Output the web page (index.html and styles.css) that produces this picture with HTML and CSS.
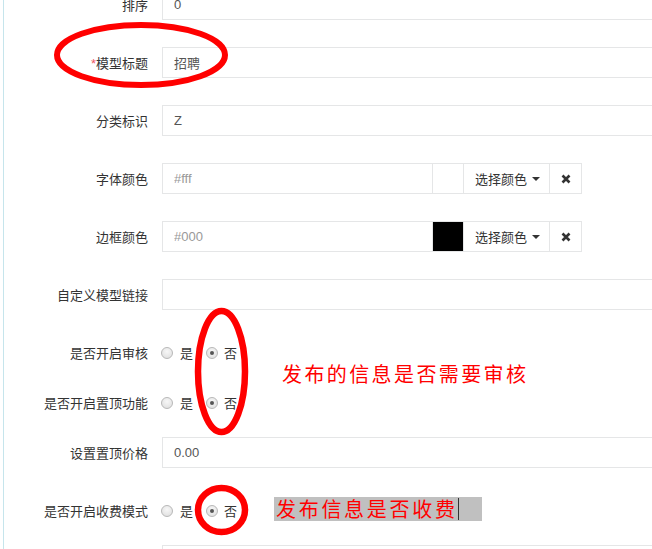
FILE: index.html
```html
<!DOCTYPE html>
<html lang="zh-CN">
<head>
    <meta charset="UTF-8">
    <title>模型设置</title>
    <link rel="stylesheet" href="styles.css">
</head>
<body>
    <div class="page">
        <form class="form">
            <div class="row row-top">
                <label class="lbl">排序</label>
                <input class="inp" type="text" value="0">
            </div>
            <div class="row">
                <label class="lbl"><span class="req">*</span>模型标题</label>
                <input class="inp" type="text" value="招聘">
            </div>
            <div class="row">
                <label class="lbl">分类标识</label>
                <input class="inp" type="text" value="Z">
            </div>
            <div class="row">
                <label class="lbl">字体颜色</label>
                <div class="color-group">
                    <input class="inp inp-color" type="text" placeholder="#fff">
                    <span class="swatch"></span>
                    <button class="btn btn-pick" type="button">选择颜色 <span class="caret"></span></button>
                    <button class="btn btn-clear" type="button">
                        <svg width="10" height="10" viewBox="0 0 10 10"><path d="M1.5 1.5L8.5 8.5M8.5 1.5L1.5 8.5" stroke="#333" stroke-width="2.6" stroke-linecap="butt"/></svg>
                    </button>
                </div>
            </div>
            <div class="row">
                <label class="lbl">边框颜色</label>
                <div class="color-group">
                    <input class="inp inp-color" type="text" placeholder="#000">
                    <span class="swatch swatch-black"></span>
                    <button class="btn btn-pick" type="button">选择颜色 <span class="caret"></span></button>
                    <button class="btn btn-clear" type="button">
                        <svg width="10" height="10" viewBox="0 0 10 10"><path d="M1.5 1.5L8.5 8.5M8.5 1.5L1.5 8.5" stroke="#333" stroke-width="2.6" stroke-linecap="butt"/></svg>
                    </button>
                </div>
            </div>
            <div class="row">
                <label class="lbl">自定义模型链接</label>
                <input class="inp" type="text">
            </div>
            <div class="row row-radio">
                <label class="lbl">是否开启审核</label>
                <div class="radios">
                    <span class="radio"><span class="dot"></span>是</span>
                    <span class="radio"><span class="dot on"></span>否</span>
                </div>
            </div>
            <div class="row row-radio">
                <label class="lbl">是否开启置顶功能</label>
                <div class="radios">
                    <span class="radio"><span class="dot"></span>是</span>
                    <span class="radio"><span class="dot on"></span>否</span>
                </div>
            </div>
            <div class="row">
                <label class="lbl">设置置顶价格</label>
                <input class="inp" type="text" value="0.00">
            </div>
            <div class="row row-radio">
                <label class="lbl">是否开启收费模式</label>
                <div class="radios">
                    <span class="radio"><span class="dot"></span>是</span>
                    <span class="radio"><span class="dot on"></span>否</span>
                </div>
            </div>
            <div class="row">
                <label class="lbl"></label>
                <input class="inp" type="text">
            </div>
        </form>
    </div>

    <!-- красные пометки поверх формы -->
    <svg class="marks" width="652" height="549" viewBox="0 0 652 549">
        <ellipse cx="141" cy="55" rx="84" ry="30" fill="none" stroke="#ff0000" stroke-width="6"/>
        <ellipse cx="221.5" cy="371.5" rx="23.5" ry="60.5" fill="none" stroke="#ff0000" stroke-width="6.5"/>
        <ellipse cx="221.5" cy="510" rx="23.5" ry="22" fill="none" stroke="#ff0000" stroke-width="6.5"/>
    </svg>
    <div class="note note-audit">发布的信息是否需要审核</div>
    <div class="note note-fee">发布信息是否收费<span class="cursor"></span></div>
</body>
</html>
```

FILE: styles.css
```css
body {
    margin: 0;
    position: relative;
    height: 549px;
    overflow: hidden;
    font-family: "Liberation Sans", "Noto Sans CJK SC", sans-serif;
    font-size: 13px;
    color: #333;
    background: #fff;
}

.page {
    height: 549px;
    margin-left: 3px;
    border-left: 1px solid #c6e5ec;
    overflow: hidden;
}

.form {
    display: flex;
    flex-direction: column;
    margin-top: -11px;
}

.row {
    display: flex;
    align-items: center;
    height: 31px;
    margin-bottom: 27px;
    flex: none;
}

.row-radio {
    margin-bottom: 19px;
}

.lbl {
    width: 144px;
    flex: none;
    margin-right: 14px;
    text-align: right;
    white-space: nowrap;
}

.req {
    color: #ed5565;
}

.inp {
    box-sizing: border-box;
    width: 560px;
    height: 31px;
    flex: none;
    padding: 0 11px;
    border: 1px solid #e5e6e7;
    border-radius: 0;
    font: inherit;
    color: #555;
    background: #fff;
    outline: none;
}

.inp::placeholder {
    color: #999;
}

/* Группа выбора цвета */
.color-group {
    display: flex;
    height: 31px;
}

.inp-color {
    width: 271px;
}

.swatch {
    box-sizing: border-box;
    width: 32px;
    height: 31px;
    margin-left: -1px;
    border: 1px solid #e5e6e7;
    background: #fff;
}

.swatch-black {
    background: #000;
}

.btn {
    box-sizing: border-box;
    height: 31px;
    margin-left: -1px;
    padding: 0;
    border: 1px solid #e5e6e7;
    border-radius: 0;
    background: #fff;
    font: inherit;
    color: #333;
    display: flex;
    align-items: center;
}

.btn-pick {
    width: 87px;
    padding-left: 11px;
    gap: 5px;
}

.caret {
    width: 0;
    height: 0;
    border-left: 4px solid transparent;
    border-right: 4px solid transparent;
    border-top: 4px solid #333;
}

.btn-clear {
    width: 33px;
    justify-content: center;
}

/* Радиокнопки */
.radios {
    display: flex;
    align-items: center;
    margin-left: -1px;
}

.radio {
    display: flex;
    align-items: center;
    margin-right: 13px;
}

.dot {
    box-sizing: border-box;
    width: 12px;
    height: 12px;
    margin-right: 7px;
    border: 1px solid #b8b8b8;
    border-radius: 50%;
    background: radial-gradient(circle at 50% 35%, #f7f7f7, #dcdcdc);
    display: flex;
    align-items: center;
    justify-content: center;
}

.radio + .radio .dot {
    margin-right: 6px;
}

.dot.on::after {
    content: '';
    width: 4px;
    height: 4px;
    border-radius: 50%;
    background: #555;
}

/* Пометки */
.marks {
    position: absolute;
    top: 0;
    left: 0;
    pointer-events: none;
}

.note {
    position: absolute;
    font-family: "Noto Sans CJK SC", sans-serif;
    font-size: 20px;
    line-height: 24px;
    color: #ff0000;
    white-space: nowrap;
}

.note-audit {
    left: 282px;
    top: 362px;
    letter-spacing: 2.4px;
}

.note-fee {
    left: 274px;
    top: 497px;
    width: 206px;
    height: 24px;
    padding-left: 2px;
    letter-spacing: 2.7px;
    background: #c0c0c0;
}

.cursor {
    display: inline-block;
    width: 1px;
    height: 22px;
    background: #333;
    vertical-align: top;
    margin-top: 1px;
}
```
